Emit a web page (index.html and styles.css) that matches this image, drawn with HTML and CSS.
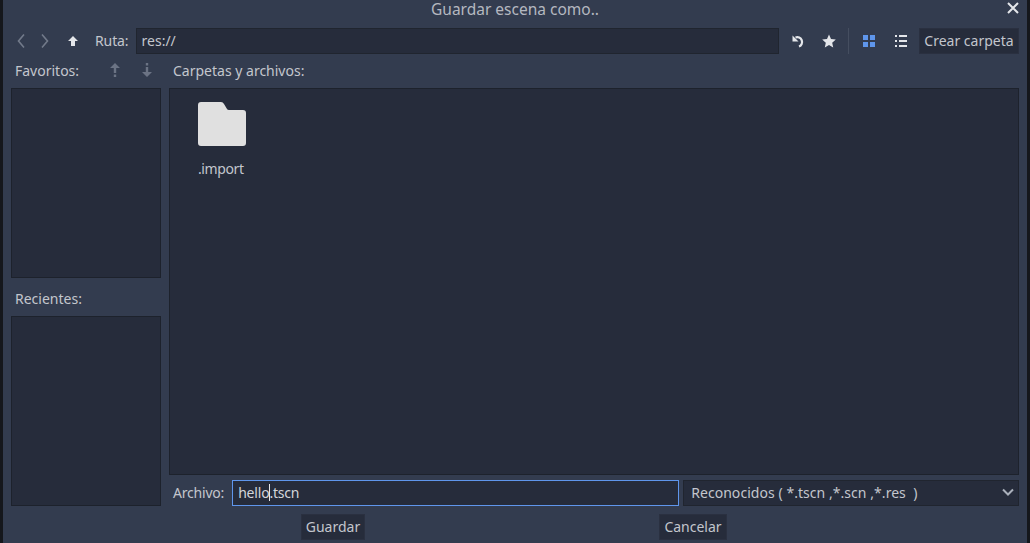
FILE: index.html
```html
<!DOCTYPE html>
<html lang="es">
<head>
  <meta charset="UTF-8">
  <title>Guardar escena como..</title>
  <link rel="stylesheet" href="styles.css">
</head>
<body>
  <div class="dialog">
    <div class="titlebar">
      <span class="title">Guardar escena como..</span>
      <svg class="close" width="12" height="12" viewBox="0 0 12 12"><path d="M1 1L11 11M11 1L1 11" stroke="#e4e6ea" stroke-width="2"/></svg>
    </div>

    <div class="toolbar">
      <svg class="icon nav-back" width="8" height="14" viewBox="0 0 8 14"><path d="M7 .5L1.500 7 7 13.500" fill="none" stroke="#727a8a" stroke-width="1.600"/></svg>
      <svg class="icon nav-fwd" width="8" height="14" viewBox="0 0 8 14"><path d="M1 .5L6.500 7 1 13.500" fill="none" stroke="#727a8a" stroke-width="1.600"/></svg>
      <svg class="icon nav-up" width="10" height="10" viewBox="0 0 10 10"><path d="M5 0l5 5H7v5H3V5H0z" fill="#e4e6ea"/></svg>
      <span class="label ruta">Ruta:</span>
      <div class="field path">res://</div>
      <svg class="icon reload" width="14" height="14" viewBox="0 0 14 14"><path d="M3.500 3.500A4.800 4.800 0 1 1 7 12.500" fill="none" stroke="#e4e6ea" stroke-width="2.200"/><path d="M.5 1.500v6h6z" fill="#e4e6ea"/></svg>
      <svg class="icon star" width="14" height="14" viewBox="0 0 14 14"><path d="M7 .5l2 4.500 4.800.5-3.600 3.200 1 4.800L7 11l-4.200 2.500 1-4.800L.2 5.500 5 5z" fill="#e4e6ea"/></svg>
      <div class="sep"></div>
      <div class="grid-icon"><i></i><i></i><i></i><i></i></div>
      <svg class="icon list" width="12" height="12" viewBox="0 0 12 12"><path d="M0 0h2v2H0zM4 0h8v2H4zM0 5h2v2H0zM4 5h8v2H4zM0 10h2v2H0zM4 10h8v2H4z" fill="#e4e6ea"/></svg>
      <div class="btn new-folder">Crear carpeta</div>
    </div>

    <div class="main">
      <div class="side">
        <div class="side-head">
          <span class="label">Favoritos:</span>
          <svg class="fav-up" width="10" height="14" viewBox="0 0 10 14"><path d="M5 0l5 5H6.200v5H3.800V5H0zM3.800 11.500h2.400V14H3.800z" fill="#6b7384"/></svg>
          <svg class="fav-down" width="10" height="14" viewBox="0 0 10 14"><path d="M5 14L0 9h3.800V4h2.400v5H10zM3.800 0h2.400v2.500H3.800z" fill="#6b7384"/></svg>
        </div>
        <div class="panel favs"></div>
        <div class="label recent-label">Recientes:</div>
        <div class="panel recents"></div>
      </div>
      <div class="files">
        <div class="label files-label">Carpetas y archivos:</div>
        <div class="panel file-area">
          <div class="file-item">
            <svg width="48" height="44" viewBox="0 0 48 44"><path d="M3 0h20q2 0 3 2l3 5q.500 1 2 1h14q3 0 3 3v30q0 3-3 3H3q-3 0-3-3V3q0-3 3-3z" fill="#e0e0e0"/></svg>
            <span class="file-name">.import</span>
          </div>
        </div>
        <div class="file-row">
          <span class="label">Archivo:</span>
          <div class="field name"><span>hello</span><i class="caret"></i><span>.tscn</span></div>
          <div class="field filter">
            <span>Reconocidos ( *.tscn ,*.scn ,*.res &nbsp;)</span>
            <svg width="12" height="8" viewBox="0 0 12 8"><path d="M1 1.500l5 5 5-5" fill="none" stroke="#aab0bb" stroke-width="2"/></svg>
          </div>
        </div>
      </div>
    </div>

    <div class="actions">
      <div class="btn save">Guardar</div>
      <div class="btn cancel">Cancelar</div>
    </div>
  </div>
</body>
</html>
```

FILE: styles.css
```css
html, body {
  margin: 0;
  height: 100%;
  background: #15171c;
  overflow: hidden;
}
body {
  font-family: "Noto Sans", sans-serif;
  font-size: 14px;
  color: #c3c6cd;
}
.dialog {
  width: 1024px;
  height: 543px;
  margin-left: 3px;
  background: #333c4f;
  display: flex;
  flex-direction: column;
}
.titlebar {
  height: 28px;
  display: flex;
  align-items: center;
  justify-content: center;
  position: relative;
}
.title {
  font-size: 15.5px;
  color: #b5b8c0;
  margin-top: -10px;
}
.close {
  position: absolute;
  right: 8px;
  top: 2px;
}
.toolbar {
  height: 26px;
  display: flex;
  align-items: center;
  padding-right: 8px;
}
.icon {
  flex: none;
}
.nav-back { margin-left: 14px; }
.nav-fwd { margin-left: 16px; }
.nav-up { margin-left: 19px; }
.ruta { margin-left: 17px; margin-bottom: 2px; letter-spacing: -0.1px; }
.label {
  color: #c3c6cd;
}
.field {
  background: #262c3b;
  border: 1px solid #20252f;
  box-sizing: border-box;
  display: flex;
  align-items: center;
  padding-bottom: 2px;
}
.path {
  flex: 1;
  height: 26px;
  margin-left: 7px;
  padding-left: 5px;
}
.reload { margin-left: 13px; }
.star { margin-left: 16px; }
.sep {
  width: 1px;
  height: 26px;
  background: #454e60;
  margin-left: 12px;
}
.grid-icon {
  display: grid;
  grid-template-columns: 5px 5px;
  gap: 2px;
  margin-left: 14px;
}
.grid-icon i {
  height: 5px;
  background: #5f96ec;
}
.list { margin-left: 20px; }
.btn {
  height: 26px;
  box-sizing: border-box;
  background: #262c3b;
  border: 1px solid #2a3040;
  display: flex;
  align-items: center;
  justify-content: center;
  padding-bottom: 2px;
}
.new-folder {
  margin-left: 12px;
  width: 100px;
}
.main {
  display: flex;
  padding: 4px 8px 0 8px;
}
.side {
  width: 150px;
  display: flex;
  flex-direction: column;
}
.side-head {
  height: 26px;
  box-sizing: border-box;
  margin-bottom: 4px;
  padding: 0 0 2px 4px;
  display: flex;
  align-items: center;
}
.fav-up { margin-left: 31px; }
.fav-down { margin-left: 22px; }
.panel {
  background: #262c3b;
  border: 1px solid #1d222c;
  box-sizing: border-box;
}
.favs { height: 190px; }
.recent-label {
  height: 38px;
  line-height: 42px;
  padding-left: 4px;
}
.recents { height: 190px; }
.files {
  flex: 1;
  display: flex;
  flex-direction: column;
  margin-left: 8px;
}
.files-label {
  height: 26px;
  line-height: 26px;
  margin-bottom: 4px;
  padding-left: 4px;
}
.file-area {
  height: 387px;
  padding: 13px 28px;
}
.file-item {
  width: 48px;
  display: flex;
  flex-direction: column;
  align-items: flex-start;
}
.file-name {
  margin-top: 13px;
  letter-spacing: -0.4px;
}
.file-row {
  display: flex;
  align-items: center;
  margin-top: 5px;
  height: 26px;
}
.file-row .label { margin: 0 0 2px 4px; letter-spacing: -0.2px; }
.name {
  width: 447px;
  height: 26px;
  margin-left: 8px;
  padding-left: 5px;
  border-color: #5f96ec;
  color: #d3d5da;
  letter-spacing: -0.2px;
}
.caret {
  width: 1px;
  height: 17px;
  margin-right: -1px;
  background: #e4e6ea;
}
.filter {
  flex: 1;
  height: 26px;
  margin-left: 4px;
  padding: 0 4px 2px 7px;
  justify-content: space-between;
  letter-spacing: 0.05px;
}
.actions {
  display: flex;
  margin-top: 8px;
}
.save { width: 64px; margin-left: 298px; }
.cancel { width: 68px; margin-left: 294px; }
```
